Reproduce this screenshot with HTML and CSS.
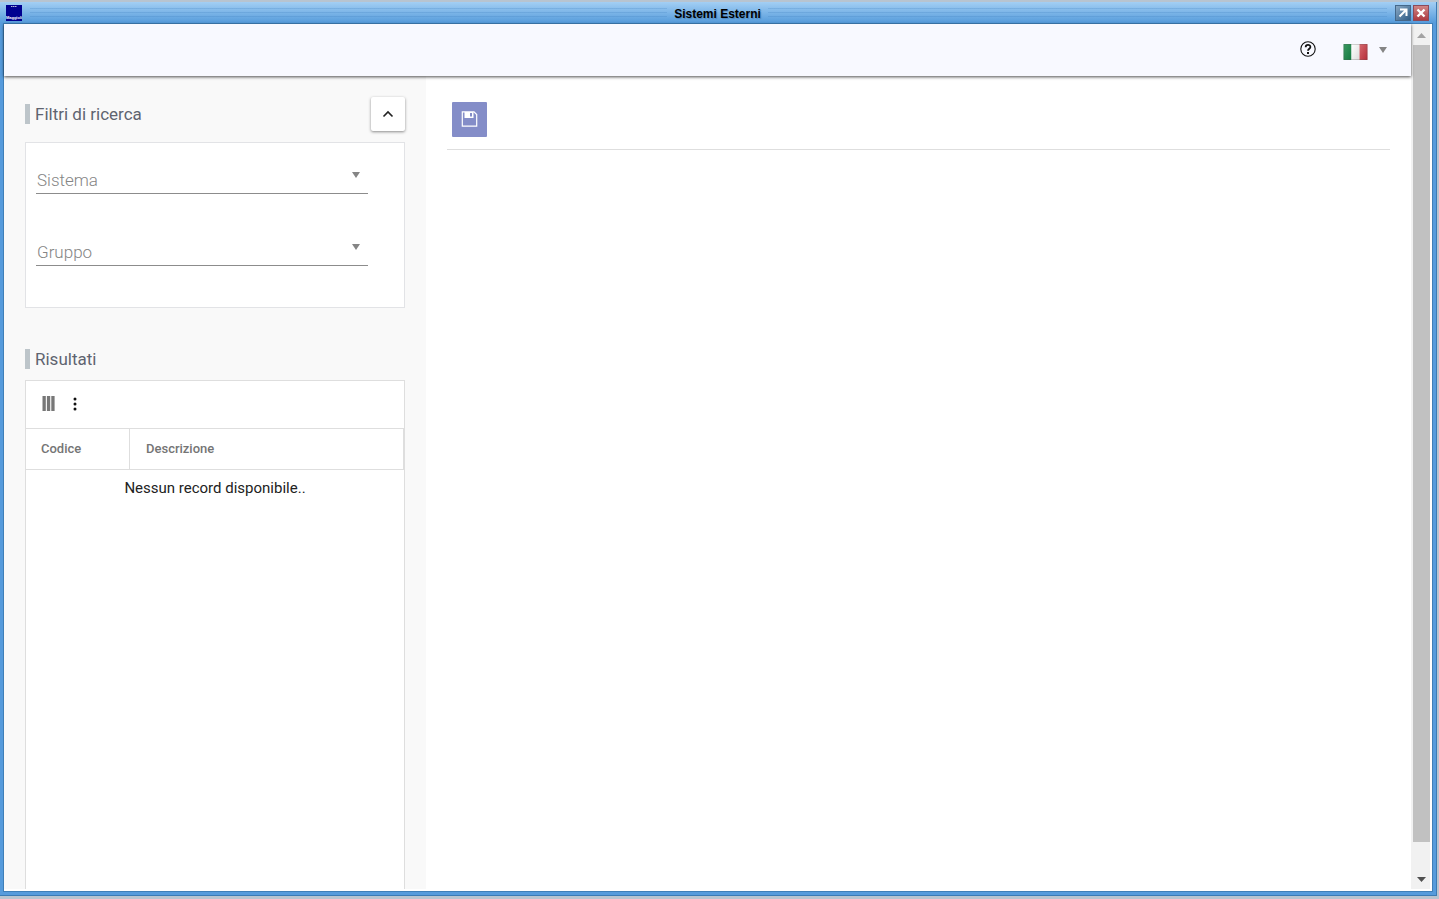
FILE: index.html
```
<!DOCTYPE html>
<html lang="it">
<head>
<meta charset="utf-8">
<title>Sistemi Esterni</title>
<link rel="stylesheet" href="styles.css">
</head>
<body>
<div class="window">
  <header class="titlebar">
    <div class="title-side">
      <svg class="app-icon" viewBox="0 0 16 16" aria-hidden="true"><rect width="16" height="16" fill="#000090"/><path d="M5 1.500h6" stroke="#b5b8dc" stroke-dasharray="1.500 .5"/><text x="8" y="14" text-anchor="middle" class="app-icon-text">Maggioli</text></svg>
      <span class="stripes"></span>
    </div>
    <h1 class="title">Sistemi Esterni</h1>
    <div class="title-side">
      <span class="stripes"></span>
      <div class="window-buttons">
        <button class="win-btn" aria-label="Ingrandisci"><svg viewBox="0 0 14 14" fill="none" stroke="#fff" stroke-width="2"><path d="M4 3.500h6.500V10M10 4 3.500 10.500"/></svg></button>
        <button class="win-btn close" aria-label="Chiudi"><svg viewBox="0 0 14 14" fill="none" stroke="#fff" stroke-width="2.400"><path d="m3.500 3.500 7 7M10.500 3.500l-7 7"/></svg></button>
      </div>
    </div>
  </header>
  <div class="viewport">
    <div class="page">
      <nav class="topbar">
        <button class="icon-btn help" aria-label="Aiuto"><svg viewBox="0 0 16 16" fill="none" stroke="#111"><circle cx="8" cy="8" r="7.200" stroke-width="1.100"/><path d="M5.700 6.200c0-3 4.700-3 4.700-.3C10.400 7.700 8 7.700 8 9.800" stroke-width="1.800"/><path d="M8 11v2" stroke-width="2"/></svg></button>
        <button class="icon-btn language" aria-label="Lingua: italiano">
          <svg class="flag" viewBox="0 0 24 16"><defs><linearGradient id="g" x2="1" y2="1"><stop stop-color="#3b9a62"/><stop offset="1" stop-color="#147a40"/></linearGradient><linearGradient id="w" x2="1" y2="1"><stop stop-color="#fff"/><stop offset="1" stop-color="#ddd"/></linearGradient><linearGradient id="r" x2="1" y2="1"><stop stop-color="#d4686e"/><stop offset="1" stop-color="#b62c38"/></linearGradient></defs><path fill="url(#g)" d="M0 0h8v16H0z"/><path fill="url(#w)" d="M8 0h8v16H8z"/><path fill="url(#r)" d="M16 0h8v16h-8z"/><path d="M.5.5h23v15H.5z" fill="none" stroke="#555" stroke-opacity=".25"/></svg>
          <svg class="caret" viewBox="0 0 8 6"><path d="M0 0h8L4 6z"/></svg>
        </button>
      </nav>
      <div class="columns">
        <aside class="sidebar">
          <div class="section-head">
            <h2>Filtri di ricerca</h2>
            <button class="collapse" aria-label="Comprimi filtri"><svg viewBox="0 0 12 8" fill="none" stroke="#222" stroke-width="1.600"><path d="m1.500 6.500 4.500-4.500 4.500 4.500"/></svg></button>
          </div>
          <form class="filters">
            <div class="field"><select aria-label="Sistema"><option>Sistema</option></select><svg class="caret" viewBox="0 0 8 6"><path d="M0 0h8L4 6z"/></svg></div>
            <div class="field"><select aria-label="Gruppo"><option>Gruppo</option></select><svg class="caret" viewBox="0 0 8 6"><path d="M0 0h8L4 6z"/></svg></div>
          </form>
          <div class="section-head results-head"><h2>Risultati</h2></div>
          <section class="results">
            <div class="tools">
              <button class="icon-btn" aria-label="Colonne"><svg class="columns-icon" viewBox="0 0 13 15" fill="#777"><path d="M.5 0h3.300v15H.5zM4.900 0h3.300v15H4.900zM9.300 0h3.300v15H9.300z"/></svg></button>
              <button class="icon-btn" aria-label="Altre azioni"><svg class="dots-icon" viewBox="0 0 4 14" fill="#111"><circle cx="2" cy="2" r="1.500"/><circle cx="2" cy="7" r="1.500"/><circle cx="2" cy="12" r="1.500"/></svg></button>
            </div>
            <table>
              <thead><tr><th class="code">Codice</th><th>Descrizione</th></tr></thead>
              <tbody><tr><td colspan="2">Nessun record disponibile..</td></tr></tbody>
            </table>
          </section>
        </aside>
        <main class="content">
          <div class="toolbar"><button class="save" aria-label="Salva"><svg viewBox="0 0 16 16"><path d="M.8.8h11.700L15.200 3.500v11.700H.8z" fill="none" stroke="#fff" stroke-width="1.200"/><path d="M3 1h9v6H3z" fill="#fff"/><path d="M8.500 2h2v3.500h-2z" fill="#848dc8"/></svg></button></div>
        </main>
      </div>
    </div>
    <div class="scrollbar">
      <button class="scroll-btn" aria-label="Scorri in alto"><svg viewBox="0 0 9 5" fill="#a3a3a3"><path d="M0 5h9L4.500 0z"/></svg></button>
      <div class="track"><div class="thumb"></div></div>
      <button class="scroll-btn" aria-label="Scorri in basso"><svg viewBox="0 0 9 5" fill="#505050"><path d="M0 0h9L4.500 5z"/></svg></button>
    </div>
  </div>
</div>
</body>
</html>
```
FILE: styles.css
```
* { box-sizing: border-box; }
body { margin: 0; background: #b8c4d0; font-family: Roboto, sans-serif; }
button { padding: 0; border: 0; background: none; font: inherit; }
svg { display: block; }
h1, h2 { margin: 0; }

.window {
  height: calc(100vh - 5px);
  margin: 2px 2px 3px 0;
  display: flex;
  flex-direction: column;
  padding: 0 3px 3px;
  background: #569bdc;
  border-right: 1px solid #3b7bb5;
  border-bottom: 1px solid #3b7bb5;
}
.titlebar {
  height: 21px;
  flex: none;
  display: flex;
  align-items: center;
  margin: 0 -3px;
  padding: 0 7px 0 6px;
  background: linear-gradient(#a3cff4, #559bdb);
}
.title-side { flex: 1 1 0; display: flex; align-items: center; }
.app-icon { width: 16px; height: 16px; margin-right: 8px; flex: none; }
.app-icon-text { font: bold 4px "Liberation Sans", sans-serif; fill: #fff; }
.stripes {
  flex: 1;
  height: 15px;
  background: repeating-linear-gradient(transparent 0 3px, rgba(55, 120, 185, .22) 3px 4px);
}
.title {
  padding: 2px 7px 0;
  font: bold 12px/16px "Liberation Sans", Arial, sans-serif;
  color: #000;
  text-shadow: 1px 1px 1px #4c86bd;
}
.window-buttons { display: flex; gap: 2px; margin: 1px 0 0 8px; }
.win-btn {
  width: 16px;
  height: 16px;
  border: 1px solid #45688a;
  background: linear-gradient(135deg, #88a8c4, #315d86);
}
.win-btn.close { border-color: #8b4a5a; background: linear-gradient(#cf8585, #ad3b42); }

.viewport {
  flex: 1;
  min-height: 0;
  display: flex;
  border: 1px solid #3f7fb8;
  background: #fff;
  padding: 0 2px 2px 0;
}
.page { flex: 1; min-width: 0; display: flex; flex-direction: column; }
.topbar {
  height: 52px;
  flex: none;
  display: flex;
  justify-content: flex-end;
  align-items: center;
  gap: 27px;
  padding-right: 24px;
  background: #f8f9ff;
  box-shadow: 0 1px 3px rgba(0, 0, 0, .7);
  z-index: 1;
}
.help { padding-bottom: 3px; }
.help svg { width: 16px; height: 16px; }
.language { display: flex; align-items: center; gap: 11px; padding-top: 3px; }
.flag { width: 25px; height: 16px; }
.caret { width: 8px; height: 6px; fill: #858585; }
.language .caret { margin-bottom: 4px; }

.columns { flex: 1; min-height: 0; display: flex; }
.sidebar {
  width: 422px;
  flex: none;
  display: flex;
  flex-direction: column;
  padding: 21px 21px 0;
  background: #f9f9f9;
}
.section-head { display: flex; justify-content: space-between; align-items: center; flex: none; }
.section-head h2 {
  border-left: 5px solid #bdc5ca;
  padding-left: 5px;
  font-size: 17px;
  line-height: 20px;
  font-weight: 400;
  color: #5f6470;
}
.collapse {
  width: 34px;
  height: 34px;
  display: grid;
  place-items: center;
  border-radius: 2px;
  background: #fff;
  box-shadow: 0 1px 3px rgba(0, 0, 0, .45);
}
.collapse svg { width: 12px; height: 8px; }
.filters {
  flex: none;
  display: flex;
  flex-direction: column;
  gap: 40px;
  margin-top: 11px;
  padding: 19px 36px 41px 10px;
  border: 1px solid #e2e3e6;
  background: #fff;
}
.field { display: grid; align-items: center; border-bottom: 1px solid #8c8c8c; }
.field select, .field .caret { grid-area: 1 / 1; }
.field select {
  width: 100%;
  height: 31px;
  padding: 4px 0 0 1px;
  border: 0;
  appearance: none;
  background: none;
  font: 300 17px/24px Roboto, sans-serif;
  color: #858585;
}
.field .caret { justify-self: end; margin: 0 8px 5px 0; pointer-events: none; }
.results-head { margin: 41px 0 11px; }
.results {
  flex: 1;
  min-height: 0;
  border: 1px solid #dedede;
  border-bottom: 0;
  background: #fff;
}
.tools { height: 47px; display: flex; align-items: center; gap: 18px; padding: 0 16px; }
.tools .icon-btn { padding-bottom: 2px; }
.columns-icon { width: 13px; height: 15px; }
.dots-icon { width: 4px; height: 14px; }
table { width: 100%; border-spacing: 0; }
th {
  height: 42px;
  padding: 0 16px 2px;
  border: solid #dedede;
  border-width: 1px 1px 1px 0;
  text-align: left;
  font-size: 13px;
  font-weight: 500;
  color: #757575;
}
th.code { width: 104px; padding-left: 15px; }
td { padding: 8px 0; text-align: center; font-size: 15px; line-height: 20px; color: #222; }

.content { flex: 1; padding: 26px 21px 0; }
.toolbar { padding: 0 5px 12px; border-bottom: 1px solid #dedede; }
.save {
  width: 35px;
  height: 35px;
  display: grid;
  place-items: center;
  border-radius: 1px;
  background: #848dc8;
}
.save svg { width: 17px; height: 16px; margin-bottom: 2px; }

.scrollbar { width: 19px; flex: none; display: flex; flex-direction: column; padding: 3px 0 0 2px; background: #f1f1f1; }
.scroll-btn { height: 18px; display: grid; place-items: center; padding-bottom: 2px; }
.scroll-btn svg { width: 9px; height: 5px; }
.track { flex: 1; }
.thumb { height: 96.5%; background: #c1c1c1; }
```
